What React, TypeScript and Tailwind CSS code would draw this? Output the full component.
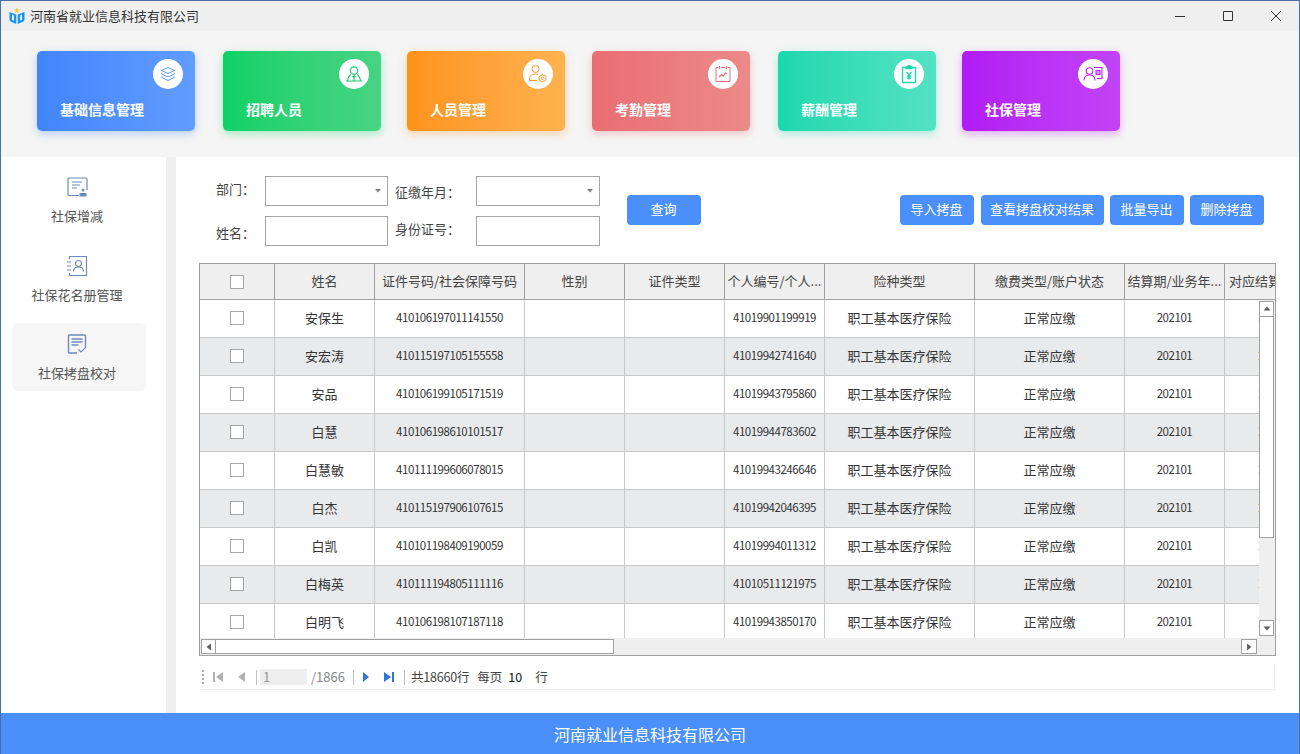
import React from 'react';

const font = { fontFamily: '"Noto Sans CJK SC", "Noto Sans", sans-serif' };

function IconLayers() {
  return (
    <svg width="16" height="16" viewBox="0 0 16 16" fill="none" stroke="#5b93fb" strokeWidth="1">
      <path d="M8 1.500 14.500 4.500 8 7.500 1.500 4.500Z" />
      <path d="M2 7 1.500 7.800 8 11 14.500 7.800 14 7" />
      <path d="M2 10.500 1.500 11.300 8 14.500 14.500 11.300 14 10.500" />
    </svg>
  );
}

function IconRecruit() {
  return (
    <svg width="18" height="18" viewBox="0 0 18 18" fill="none" stroke="#12cf6a" strokeWidth="1.200">
      <circle cx="9" cy="5.500" r="3.700" />
      <path d="M6 9.500C4 10.500 3 13 2.500 15.500M12 9.500c2 1 3 3.500 3.500 6M1 16h16M9 11v5M7.500 12 9 10.500l1.500 1.500" />
    </svg>
  );
}

function IconPerson() {
  return (
    <svg width="20" height="20" viewBox="0 0 20 20" fill="none" stroke="#fb9a2c" strokeWidth="1">
      <circle cx="7.500" cy="5" r="3.500" />
      <path d="M1.500 16.500v-1.500c0-3 2.500-5 6-5 1 0 1.800.2 2.500.5M1.500 16.500h7.500" />
      <path d="M14.500 10.500 18 12.500v3.500l-3.500 2-3.500-2v-3.500Z" />
      <circle cx="14.500" cy="14.300" r="1.300" />
    </svg>
  );
}

function IconCalendar() {
  return (
    <svg width="18" height="18" viewBox="0 0 18 18" fill="none" stroke="#ea7277" strokeWidth="1">
      <path d="M4.500 2.500H2v14h14v-14h-2.500M7 2.500h4" />
      <path d="M5.500 1v3M12.500 1v3" />
      <path d="M5 12l2.500-2.500 1.500 1.500 2.500-3 1.500 1" strokeWidth="1.200" />
    </svg>
  );
}

function IconClipboard() {
  return (
    <svg width="18" height="20" viewBox="0 0 18 20" fill="none" stroke="#1fd6ad" strokeWidth="1.300">
      <path d="M6 3.500H2.500v15h13v-15H12" />
      <path d="M6 4.500V3h1.500a1.500 1.500 0 0 1 3 0H12v1.500Z" fill="#1fd6ad" />
      <path d="M6.500 8 9 11l2.500-3M9 11v4.500M6.800 12h4.400M6.800 14h4.400" />
    </svg>
  );
}

function IconSocial() {
  return (
    <svg width="20" height="18" viewBox="0 0 20 18" fill="none" stroke="#b224f5" strokeWidth="1.100">
      <circle cx="6.500" cy="6" r="3.300" />
      <path d="M1 15.500c0-3.500 2.300-5.500 5.500-5.500s5.500 2 5.500 5.500" />
      <path d="M11 2.500h8v11h-5" />
      <path d="M13 5.500h4v4h-4Z" fill="#b224f5" fillOpacity="0.45" />
    </svg>
  );
}

function IconLogo() {
  return (
    <svg width="16" height="16" viewBox="0 0 16 16">
      <path d="M8 0 10.500 2.500 8 5 5.500 2.500Z" fill="#f8c93a" />
      <path d="M.5 4 7.300 6.500V16L2.500 14C1.200 13.500.5 12.500.5 11Z" fill="#1a96ee" />
      <path d="M15.500 4 8.700 6.500V16L13.500 14C14.800 13.500 15.500 12.500 15.500 11Z" fill="#1a96ee" />
      <path d="M3 6.500 4.800 7.200V12.500L3 11.800ZM13 6.500 11.200 7.200V12.500L13 11.800Z" fill="#ffffff" />
    </svg>
  );
}

function IconDocUser() {
  return (
    <svg width="21" height="20" viewBox="0 0 21 20" fill="none" stroke="#6f8bbd" strokeWidth="1.200">
      <path d="M12 18.500H2a1 1 0 0 1-1-1V2a1 1 0 0 1 1-1h17a1 1 0 0 1 1 1v11" />
      <path d="M5 5h10M5 8h8M5 11h5" />
      <circle cx="16" cy="13" r="1.500" fill="#6f8bbd" stroke="none" />
      <path d="M12.500 19.500V16h7v3.500Z" fill="#6f8bbd" stroke="none" />
    </svg>
  );
}

function IconRoster() {
  return (
    <svg width="21" height="22" viewBox="0 0 21 22" fill="none" stroke="#6f8bbd" strokeWidth="1.200">
      <path d="M2.500 4V1.500h17v19h-17V18" />
      <path d="M0 7h4M0 11h4M0 15h4" />
      <circle cx="11.500" cy="8.500" r="3" />
      <path d="M6.500 16.500c0-3 2-4.500 5-4.500s5 1.500 5 4.500" />
    </svg>
  );
}

function IconCheckDoc() {
  return (
    <svg width="20" height="20" viewBox="0 0 20 20" fill="none" stroke="#6f8bbd" strokeWidth="1.400">
      <path d="M10 19H2.500a1 1 0 0 1-1-1V2a1 1 0 0 1 1-1h15a1 1 0 0 1 1 1v11" />
      <path d="M4.500 5h11M4.500 8h11M4.500 11h7" />
      <path d="M11.500 15.500l2.500 2.500 5-5" strokeWidth="1.200" />
    </svg>
  );
}

const cards = [
  { title: '基础信息管理', m: 'ml-0', bg: 'bg-gradient-to-r from-[#4285fb] to-[#619cff] shadow-[0_3px_8px_rgba(66,133,251,0.35)]', icon: <IconLayers /> },
  { title: '招聘人员', m: 'ml-[28px]', bg: 'bg-gradient-to-r from-[#0cd166] to-[#46d384] shadow-[0_3px_8px_rgba(12,209,102,0.35)]', icon: <IconRecruit /> },
  { title: '人员管理', m: 'ml-[26px]', bg: 'bg-gradient-to-r from-[#ff931a] to-[#ffb24e] shadow-[0_3px_8px_rgba(255,147,26,0.35)]', icon: <IconPerson /> },
  { title: '考勤管理', m: 'ml-[27px]', bg: 'bg-gradient-to-r from-[#e96e72] to-[#ec8a8a] shadow-[0_3px_8px_rgba(233,110,114,0.35)]', icon: <IconCalendar /> },
  { title: '薪酬管理', m: 'ml-[28px]', bg: 'bg-gradient-to-r from-[#1bd8ad] to-[#52e2c4] shadow-[0_3px_8px_rgba(27,216,173,0.35)]', icon: <IconClipboard /> },
  { title: '社保管理', m: 'ml-[26px]', bg: 'bg-gradient-to-r from-[#b11af5] to-[#c243f6] shadow-[0_3px_8px_rgba(177,26,245,0.35)]', icon: <IconSocial /> },
];

const cols = ['w-[100px]', 'w-[150px]', 'w-[100px]', 'w-[100px]', 'w-[100px]', 'w-[150px]', 'w-[150px]', 'w-[100px]', 'w-[100px]'];

const headers = ['姓名', '证件号码/社会保障号码', '性别', '证件类型', '个人编号/个人...', '险种类型', '缴费类型/账户状态', '结算期/业务年...'];

const rows = [
  ['安保生', '410106197011141550', '41019901199919'],
  ['安宏涛', '410115197105155558', '41019942741640'],
  ['安品', '410106199105171519', '41019943795860'],
  ['白慧', '410106198610101517', '41019944783602'],
  ['白慧敏', '410111199606078015', '41019943246646'],
  ['白杰', '410115197906107615', '41019942046395'],
  ['白凯', '410101198409190059', '41019994011312'],
  ['白梅英', '410111194805111116', '41010511121975'],
  ['白明飞', '410106198107187118', '41019943850170'],
];

function Check() {
  return <span className="block w-[14px] h-[14px] bg-white border border-[#a6a6a6]" />;
}

function HeaderRow() {
  return (
    <div className="flex h-[36px] shrink-0 bg-[#efefef] border-b border-[#a0a0a0] w-[1075px] overflow-hidden text-[13px] text-[#444]">
      <div className="w-[75px] shrink-0 flex items-center justify-center border-r border-[#a0a0a0]">
        <Check />
      </div>
      {headers.map((h, i) => (
        <div key={h} className={`${cols[i]} shrink-0 flex items-center justify-center whitespace-nowrap overflow-hidden border-r border-[#a0a0a0] pb-px`}>
          {h}
        </div>
      ))}
      <div className="flex-1 min-w-0 flex items-center pl-[4px] pb-px whitespace-nowrap overflow-hidden">对应结算期/业务年月</div>
    </div>
  );
}

function Cell({ w, children, num }: { w: string; children?: React.ReactNode; num?: boolean }) {
  return (
    <div className={`${w} shrink-0 flex items-center justify-center pb-[2px] whitespace-nowrap border-r border-[#c8c8c8] ${num ? 'text-[11.5px] tracking-[-0.45px]' : 'text-[13px]'}`}>
      {children}
    </div>
  );
}

function Row({ r, odd }: { r: string[]; odd: boolean }) {
  return (
    <div className={`flex h-[38px] shrink-0 border-b border-[#c8c8c8] text-[#333] ${odd ? 'bg-[#e9eaec]' : 'bg-white'}`}>
      <div className="w-[75px] shrink-0 flex items-center justify-center pb-[2px] border-r border-[#c8c8c8]">
        <Check />
      </div>
      <Cell w={cols[0]}>{r[0]}</Cell>
      <Cell w={cols[1]} num>{r[1]}</Cell>
      <Cell w={cols[2]} />
      <Cell w={cols[3]} />
      <Cell w={cols[4]} num>{r[2]}</Cell>
      <Cell w={cols[5]}>职工基本医疗保险</Cell>
      <Cell w={cols[6]}>正常应缴</Cell>
      <Cell w={cols[7]} num>202101</Cell>
      <Cell w={cols[8]} num>
        <span className="pl-[3px]">202101</span>
      </Cell>
    </div>
  );
}

function Arrow({ dir }: { dir: 'up' | 'down' | 'left' | 'right' }) {
  const d = { up: 'M4 1.500 7.500 5.500H.5Z', down: 'M.5 2.500h7L4 6.500Z', left: 'M6 .5V7.500L1.500 4Z', right: 'M2 .5V7.500L6.500 4Z' }[dir];
  return (
    <svg width="8" height="8" viewBox="0 0 8 8">
      <path d={d} fill="#606060" />
    </svg>
  );
}

function ScrollBtn({ dir, cls }: { dir: 'up' | 'down' | 'left' | 'right'; cls: string }) {
  return (
    <div className={`${cls} shrink-0 bg-white border border-[#a0a0a0] flex items-center justify-center`}>
      <Arrow dir={dir} />
    </div>
  );
}

function Btn({ w, children }: { w: string; children: React.ReactNode }) {
  return (
    <button className={`${w} h-[30px] rounded-[4px] bg-[#4b8ffa] text-white text-[13px] flex items-center justify-center pb-[2px] pr-px`}>
      {children}
    </button>
  );
}

function Caret() {
  return (
    <svg width="6" height="4" viewBox="0 0 6 4" className="mr-[6px]">
      <path d="M0 0h6L3 3.500Z" fill="#808080" />
    </svg>
  );
}

function Pager() {
  return (
    <div className="ml-[24px] mr-[24px] mt-[11px] h-[23px] pb-[2px] flex items-center border-b border-r border-[#ececec] text-[12.5px] text-[#555]">
      <div className="w-[2px] h-[14px] ml-[2px] border-l-2 border-dotted border-[#b0b0b0]" />
      <svg width="12" height="12" viewBox="0 0 12 12" className="ml-[8px]">
        <path d="M1 1h2v10H1ZM11 1v10L4 6Z" fill="#b0b0b0" />
      </svg>
      <svg width="10" height="12" viewBox="0 0 10 12" className="ml-[13px]">
        <path d="M8 1v10L1 6Z" fill="#b0b0b0" />
      </svg>
      <div className="w-px h-[15px] bg-[#c0c0c0] ml-[9px]" />
      <div className="w-[47px] h-[16px] bg-[#eeeeee] text-[#999] leading-[16px] pl-[3px] ml-[3px] text-[13px]">1</div>
      <span className="ml-[4px] text-[#8a8a8a] text-[13px]">/1866</span>
      <div className="w-px h-[15px] bg-[#c0c0c0] ml-[8px]" />
      <svg width="10" height="12" viewBox="0 0 10 12" className="ml-[7px]">
        <path d="M2 1v10L8 6Z" fill="#2f74d8" />
      </svg>
      <svg width="12" height="12" viewBox="0 0 12 12" className="ml-[12px]">
        <path d="M1 1v10L8 6Z" fill="#2f74d8" />
        <path d="M9 1h2v10H9Z" fill="#2f74d8" />
      </svg>
      <div className="w-px h-[15px] bg-[#c0c0c0] ml-[9px]" />
      <span className="ml-[6px] text-[#444] tracking-[-0.2px]">共18660行</span>
      <span className="ml-[8px] text-[#444]">每页</span>
      <span className="ml-[6px] text-[#111]">10</span>
      <span className="ml-[13px] text-[#444]">行</span>
    </div>
  );
}

export default function App() {
  return (
    <div className="w-[1300px] h-[754px] flex flex-col overflow-hidden border-t border-x border-[#4a6fa5] bg-white" style={font}>
      <div className="h-[30px] shrink-0 bg-[#efefef] flex items-center pl-[8px]">
        <IconLogo />
        <span className="ml-[5px] text-[13px] text-[#333]">河南省就业信息科技有限公司</span>
        <div className="ml-auto flex items-center">
          <svg width="12" height="12" viewBox="0 0 12 12" className="mr-[36px]"><path d="M1 6.500h10" stroke="#333" /></svg>
          <svg width="12" height="12" viewBox="0 0 12 12" className="mr-[36px]"><path d="M1.500 1.500h9v9h-9Z" stroke="#333" fill="none" /></svg>
          <svg width="12" height="12" viewBox="0 0 12 12" className="mr-[17px]"><path d="M1 1l10 10M11 1 1 11" stroke="#333" /></svg>
        </div>
      </div>

      <div className="h-[126px] shrink-0 bg-[#f5f5f5] flex items-start pt-[20px] pl-[36px]">
        {cards.map((c) => (
          <div key={c.title} className={`w-[158px] h-[80px] rounded-[5px] flex flex-col ${c.m} ${c.bg}`}>
            <div className="flex justify-end pt-[8px] pr-[12px]">
              <div className="w-[30px] h-[30px] rounded-full bg-white flex items-center justify-center">{c.icon}</div>
            </div>
            <div className="pl-[23px] mt-[9px] text-[14px] font-bold text-white leading-[22px]">{c.title}</div>
          </div>
        ))}
      </div>

      <div className="flex-1 flex min-h-0">
        <div className="w-[165px] shrink-0 pt-[10px] pl-[11px] flex flex-col text-[13px] text-[#555]">
          <div className="w-[130px] h-[78px] flex flex-col items-center pt-[10px]">
            <IconDocUser />
            <span className="mt-[10px] leading-[18px]">社保增减</span>
          </div>
          <div className="w-[130px] h-[78px] flex flex-col items-center pt-[10px]">
            <IconRoster />
            <span className="mt-[9px] leading-[18px]">社保花名册管理</span>
          </div>
          <div className="w-[134px] h-[68px] rounded-[6px] bg-[#f6f6f6] flex flex-col items-center pt-[11px] pr-[4px]">
            <IconCheckDoc />
            <span className="mt-[10px] leading-[18px]">社保拷盘校对</span>
          </div>
        </div>
        <div className="w-[10px] shrink-0 bg-[#efefef]" />

        <div className="flex-1 min-w-0 flex flex-col">
          <div className="h-[106px] shrink-0 flex pt-[19px] pl-[40px] text-[13px] text-[#444]">
            <div className="flex flex-col gap-[10px] w-[172px]">
              <div className="h-[30px] flex">
                <span className="w-[49px] leading-[26px]">部门：</span>
                <div className="w-[123px] h-[30px] border border-[#a6a6a6] flex items-center justify-end"><Caret /></div>
              </div>
              <div className="h-[30px] flex">
                <span className="w-[49px] leading-[34px]">姓名：</span>
                <div className="w-[123px] h-[30px] border border-[#a6a6a6]" />
              </div>
            </div>
            <div className="flex flex-col gap-[10px] w-[212px] ml-[7px]">
              <div className="h-[30px] flex">
                <span className="w-[81px] leading-[32px]">征缴年月：</span>
                <div className="w-[124px] h-[30px] border border-[#a6a6a6] flex items-center justify-end"><Caret /></div>
              </div>
              <div className="h-[30px] flex">
                <span className="w-[81px] leading-[26px]">身份证号：</span>
                <div className="w-[124px] h-[30px] border border-[#a6a6a6]" />
              </div>
            </div>
            <div className="ml-[20px] pt-[19px] flex">
              <Btn w="w-[74px]">查询</Btn>
              <div className="ml-[199px] flex gap-[6px]">
                <Btn w="w-[74px]">导入拷盘</Btn>
                <Btn w="w-[123px] ml-px">查看拷盘校对结果</Btn>
                <Btn w="w-[74px]">批量导出</Btn>
                <Btn w="w-[74px]">删除拷盘</Btn>
              </div>
            </div>
          </div>

          <div className="ml-[23px] w-[1077px] h-[393px] shrink-0 border border-[#a0a0a0] flex flex-col bg-[#efefef]">
            <HeaderRow />
            <div className="flex flex-1 min-h-0">
              <div className="w-[1059px] overflow-hidden flex flex-col">
                {rows.map((r, i) => (
                  <Row key={r[0]} r={r} odd={i % 2 === 1} />
                ))}
              </div>
              <div className="flex-1 flex flex-col items-start pt-px pb-[2px]">
                <ScrollBtn dir="up" cls="w-[15px] h-[16px]" />
                <div className="w-[15px] h-[221px] bg-white border border-[#a0a0a0] border-t-0" />
                <div className="flex-1" />
                <ScrollBtn dir="down" cls="w-[15px] h-[16px]" />
              </div>
            </div>
            <div className="h-[17px] shrink-0 flex items-center pl-px pr-[18px]">
              <ScrollBtn dir="left" cls="w-[15px] h-[15px]" />
              <div className="w-[398px] h-[15px] bg-white border border-[#a0a0a0] border-l-0" />
              <div className="flex-1" />
              <ScrollBtn dir="right" cls="w-[16px] h-[15px]" />
            </div>
          </div>

          <Pager />
        </div>
      </div>

      <div className="h-[41px] shrink-0 bg-[#4b8ffa] flex items-center justify-center text-white text-[16px]">
        河南就业信息科技有限公司
      </div>
    </div>
  );
}
